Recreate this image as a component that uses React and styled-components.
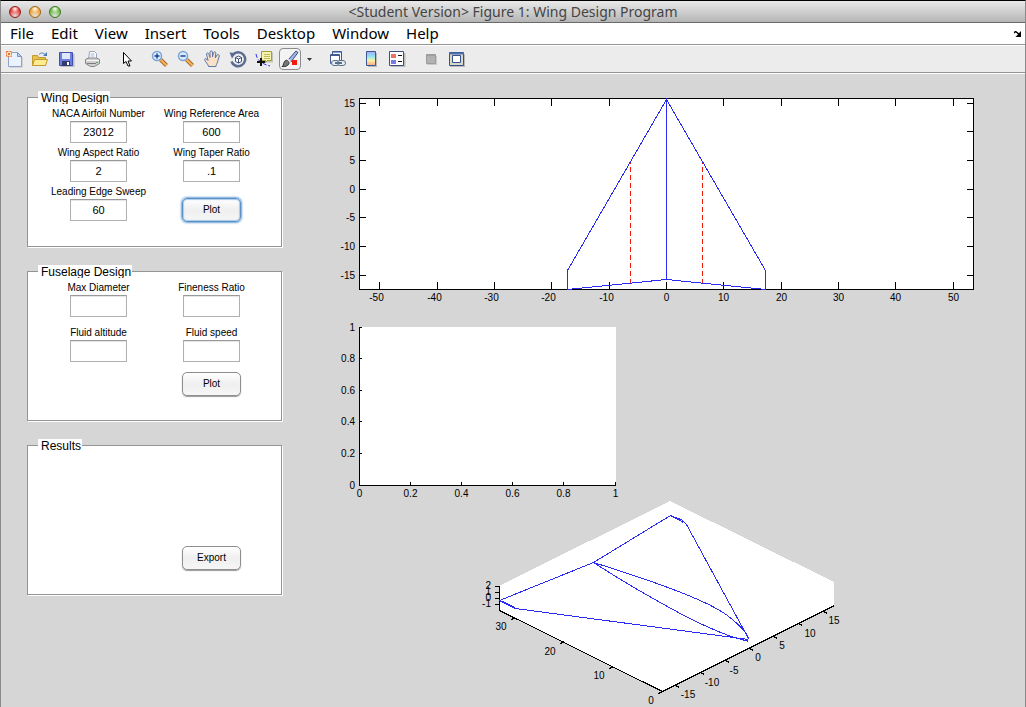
import { Fragment } from 'react';
import styled, { createGlobalStyle, css } from 'styled-components';

const GlobalStyle = createGlobalStyle`
  * {
    box-sizing: border-box;
  }

  body {
    margin: 0;
    background: #d6d6d6;
    color: #000;
    font-family: "Liberation Sans", Helvetica, Arial, sans-serif;
  }

  button {
    font: inherit;
    color: inherit;
  }
`;

const menus = ['File', 'Edit', 'View', 'Insert', 'Tools', 'Desktop', 'Window', 'Help'];

const wingFields = [
  { id: 'airfoil', label: 'NACA Airfoil Number', value: '23012' },
  { id: 'refArea', label: 'Wing Reference Area', value: '600' },
  { id: 'aspectRatio', label: 'Wing Aspect Ratio', value: '2' },
  { id: 'taperRatio', label: 'Wing Taper Ratio', value: '.1' },
  { id: 'sweep', label: 'Leading Edge Sweep', value: '60' },
];

const fuselageFields = [
  { id: 'maxDiameter', label: 'Max Diameter', value: '' },
  { id: 'fineness', label: 'Fineness Ratio', value: '' },
  { id: 'altitude', label: 'Fluid altitude', value: '' },
  { id: 'speed', label: 'Fluid speed', value: '' },
];

const icons = {
  newFile: (
    <>
      <path d="M5 3.5h8.5l4 4v10H5z" fill="#9aa0ac" opacity=".6" />
      <path d="M3.5 2.5h9l4 4v10h-13z" fill="#eaf2fd" stroke="#8fa2cc" />
      <path d="M12.5 2.5v4h4z" fill="#b9cdf0" stroke="#7d93c4" />
      <path d="M1.5 1.5h5v5h-5z" fill="#ffe3b5" stroke="#e8703a" strokeDasharray="2 1" />
      <path d="M3 3h2v2H3z" fill="#e8703a" />
    </>
  ),
  open: (
    <>
      <path d="M1.5 15.5v-10h5l1 2h7v8z" fill="#e9c04e" stroke="#c39a2c" />
      <path d="M1.5 15.5l2-6h13l-2 6z" fill="#fdeb8f" stroke="#c39a2c" />
      <path d="M8 4.5c2-2 4-2 6 0" fill="none" stroke="#4b78b8" />
      <path d="M16 2v4h-4z" fill="#4b78b8" />
    </>
  ),
  save: (
    <>
      <path d="M3.5 4h14v13h-14z" fill="#8d8d99" opacity=".5" />
      <path d="M2.5 2.5h13v13h-13z" fill="#6f7fe0" stroke="#4250ac" />
      <path d="M5 3h8v6H5z" fill="#dfe9fb" />
      <path d="M5 11h8v5H5z" fill="#333a6c" />
      <path d="M10 12h2v3h-2z" fill="#fff" />
    </>
  ),
  print: (
    <>
      <path d="M5.5 9.5l1-8h5l2 2v6" fill="#fff" stroke="#9aa6bc" />
      <path d="M7.5 4h4M7.5 6h4" stroke="#9fb4dc" />
      <path d="M2.5 9.5l3-1.500h8l3 1.500v4l-5 3h-4l-5-3z" fill="#cfcfcf" stroke="#858585" />
      <path d="M3 10.500h13" stroke="#f5f5f5" />
      <path d="M4 13.500h9" stroke="#7c7c7c" />
      <path d="M13 12h2v1h-2z" fill="#5bb554" />
    </>
  ),
  pointer: <path d="M6.5 2.5v11l2.5-2 2 4.500h2l-2-5h3.500z" fill="#fff" stroke="#000" />,
  zoomIn: (
    <>
      <path d="M9.5 9.5l6 6" stroke="#a86d2c" strokeWidth="4" />
      <path d="M9.5 9.5l6 6" stroke="#f6b45e" strokeWidth="2" />
      <circle cx="6" cy="6" r="4.5" fill="#d5eefb" stroke="#7fa1d6" strokeWidth="1.5" />
      <path d="M3.5 6h5M6 3.5v5" stroke="#1f3f94" strokeWidth="1.5" />
    </>
  ),
  zoomOut: (
    <>
      <path d="M9.5 9.5l6 6" stroke="#a86d2c" strokeWidth="4" />
      <path d="M9.5 9.5l6 6" stroke="#f6b45e" strokeWidth="2" />
      <circle cx="6" cy="6" r="4.5" fill="#d5eefb" stroke="#7fa1d6" strokeWidth="1.5" />
      <path d="M3.5 6h5" stroke="#1f3f94" strokeWidth="1.5" />
    </>
  ),
  pan: (
    <path
      d="M5.500 16.500c0-2-3.500-5-4-7 .5-1.500 2-1 3.500 1L3.500 4c.5-1.500 2-1.500 2.500.5l1 3V2c.5-1.500 2-1.500 2.500 0v5l1-4.500c.8-1.300 2.300-.8 2.300.5L12.300 8l1.700-3c1-1 2.500-.3 2.300 1l-1.800 6c-.5 2-1.500 2.500-1.500 4.500z"
      fill="#fbe0c8"
      stroke="#5d78ad"
    />
  ),
  rotate: (
    <>
      <path d="M4 4.500a7 7 0 1 1-1.500 7" fill="none" stroke="#5b6d92" strokeWidth="2.500" />
      <path d="M0.500 2.500l6.500.5-4 5.500z" fill="#5b6d92" />
      <path d="M6.500 7.500l3-1.500 3 1.500v4l-3 1.500-3-1.500zM6.500 7.500l3 1.500 3-1.500M9.500 9v4" fill="#fff" stroke="#41527a" />
    </>
  ),
  dataCursor: (
    <>
      <path d="M8 2.500h10v10H8z" fill="#9c9c8a" opacity=".5" />
      <path d="M6.500 1.500h10v9h-4l-2 2v-2h-4z" fill="#f4f2ae" stroke="#a39c3c" />
      <path d="M9 4.500h6M9 6.500h6M9 8.500h6" stroke="#c2bb62" />
      <path d="M1 4c1 5 3 9 14 12" fill="none" stroke="#2a2ae8" strokeDasharray="4 2" />
      <path d="M2 12h8M6 8v8" stroke="#111" strokeWidth="2" />
    </>
  ),
  brush: (
    <>
      <path d="M7 10l8-9 2 1.500L10 12z" fill="#9db8e6" stroke="#3c4f7c" />
      <path d="M1 16.500c2-1 1-4 3.500-6 2-1 4 1 3.500 3-1 2.500-4 3.500-7 3z" fill="#777" stroke="#333" />
      <path d="M6.500 9l3 3" stroke="#eee" strokeWidth="1.500" />
      <path d="M11 10h5v5h-5z" fill="#f51b0b" />
    </>
  ),
  link: (
    <>
      <path d="M4.500 1.500h9v9h-9z" fill="#f2f7ff" stroke="#42598f" />
      <path d="M5 2.500h8" stroke="#7f9bd0" />
      <path d="M2.500 4.500h9v9h-9z" fill="#fff" stroke="#42598f" />
      <path d="M3 5.500h8" stroke="#42598f" />
      <rect x="3.500" y="10.500" width="8" height="5" rx="2.500" fill="#e6edf4" stroke="#5a7088" />
      <rect x="9.500" y="10.500" width="8" height="5" rx="2.500" fill="#e6edf4" stroke="#5a7088" />
      <path d="M7 13h7" stroke="#5a7088" strokeWidth="2" />
    </>
  ),
  colorbar: (
    <>
      <defs>
        <linearGradient id="barFill" x1="0" y1="0" x2="0" y2="1">
          <stop offset="0" stopColor="#a9a7f3" />
          <stop offset=".35" stopColor="#8fe4f5" />
          <stop offset=".65" stopColor="#f9f4a0" />
          <stop offset="1" stopColor="#f9a290" />
        </linearGradient>
      </defs>
      <path d="M6 3h9v14H6z" fill="#999" opacity=".6" />
      <path d="M4.500 1.500h9v14h-9z" fill="url(#barFill)" stroke="#3d5790" />
    </>
  ),
  legend: (
    <>
      <path d="M3 3h14.500v14H3z" fill="#999" opacity=".6" />
      <path d="M1.500 1.500h14v14h-14z" fill="#fff" stroke="#3d4f80" />
      <path d="M3 4h5v4H3z" fill="#ee7168" />
      <path d="M3 10h5v4H3z" fill="#7b79e8" />
      <path d="M10 5.500h4M10 11.500h4" stroke="#111" />
    </>
  ),
  hideTools: (
    <>
      <path d="M5 6h10v9H5z" fill="#c9c9c9" />
      <path d="M4.500 4.500h9v9h-9z" fill="#b2b2b2" stroke="#9c9c9c" />
      <path d="M5 5.500h8" stroke="#a0a0a0" />
    </>
  ),
  showTools: (
    <>
      <path d="M2 4h15v13H2z" fill="#999" opacity=".6" />
      <path d="M1.500 2.500h14v13h-14z" fill="#d9d8c6" stroke="#34508f" />
      <path d="M1 3.500h15" stroke="#4f6eae" strokeWidth="2" />
      <path d="M4.500 5.500h8v7h-8z" fill="#fff" stroke="#34508f" />
    </>
  ),
};

const toolGroups = [
  ['newFile', 'open', 'save', 'print'],
  ['pointer'],
  ['zoomIn', 'zoomOut', 'pan', 'rotate', 'dataCursor', 'brush'],
  ['link'],
  ['colorbar', 'legend'],
  ['hideTools', 'showTools'],
];

function ToolBar() {
  return (
    <ToolBarStyle>
      {toolGroups.map((group) => (
        <ToolGroup key={group[0]}>
          {group.map((name) => (
            <Fragment key={name}>
              <ToolButton type="button" aria-label={name}>
                <ToolFace $pressed={name === 'brush'}>
                  <svg width="18" height="18" fill="none">
                    {icons[name]}
                  </svg>
                </ToolFace>
              </ToolButton>
              {name === 'brush' && (
                <CaretButton type="button" aria-label="brush colour">
                  <svg width="5" height="3">
                    <path d="M0 0h5L2.500 3z" fill="#333" />
                  </svg>
                </CaretButton>
              )}
            </Fragment>
          ))}
        </ToolGroup>
      ))}
    </ToolBarStyle>
  );
}

function Panel({ title, fields = [], rowGap, action, focused }) {
  return (
    <PanelStyle>
      <PanelTitle>{title}</PanelTitle>
      <PanelGrid $rowGap={rowGap}>
        {fields.map(({ id, label, value }) => (
          <Field key={id}>
            <label htmlFor={id}>{label}</label>
            <input id={id} type="text" defaultValue={value} />
          </Field>
        ))}
        <PushButton type="button" $focused={focused}>
          {action}
        </PushButton>
      </PanelGrid>
    </PanelStyle>
  );
}

function PlanformPlot() {
  const toX = (v) => Math.round(666 + v * 5.735) + 0.5;
  const toY = (v) => Math.round(188.7 - v * 5.735) + 0.5;

  return (
    <WidePlot viewBox="335 90 650 215">
      <rect x="359.500" y="98.500" width="614" height="191" fill="#fff" stroke="#000" />
      {[-50, -40, -30, -20, -10, 0, 10, 20, 30, 40, 50].map((v) => (
        <Fragment key={v}>
          <path d={`M${toX(v)} 98v8M${toX(v)} 290v-8`} stroke="#000" />
          <text x={toX(v) - (v < 0 ? 3 : 0)} y="301" textAnchor="middle">
            {v}
          </text>
        </Fragment>
      ))}
      {[15, 10, 5, 0, -5, -10, -15].map((v) => (
        <Fragment key={v}>
          <path d={`M359 ${toY(v)}h7M974 ${toY(v)}h-7`} stroke="#000" />
          <text x="355" y={toY(v) + 3.5} textAnchor="end">
            {v}
          </text>
        </Fragment>
      ))}
      <path d="M630.500 284V162M702.500 284V162" stroke="#f51b0b" strokeDasharray="5 3" />
      <path
        d="M666.500 99.500L567.500 270.500V289.500L666.500 279.500L765.500 289.500V270.500L666.500 99.500V279.500"
        fill="none"
        stroke="#2a2af5"
      />
    </WidePlot>
  );
}

function EmptyPlot() {
  const ticks = [0, 0.2, 0.4, 0.6, 0.8, 1];
  const toX = (v) => Math.floor(359 + v * 256) + 0.5;
  const toY = (v) => Math.floor(485 - v * 158) + 0.5;

  return (
    <SmallPlot viewBox="335 318 300 182">
      <path d="M359 327h257v159H359z" fill="#fff" />
      <path d="M359.500 327v158.500H616" fill="none" stroke="#000" />
      {ticks.map((v) => (
        <Fragment key={v}>
          <path d={`M${toX(v)} 486v-4M359 ${toY(v)}h3`} stroke="#000" />
          <text x={toX(v)} y="497" textAnchor="middle">
            {v}
          </text>
          <text x="355" y={toY(v) + 3.5} textAnchor="end">
            {v}
          </text>
        </Fragment>
      ))}
    </SmallPlot>
  );
}

const isoLabels = [
  ['30', 501, 630],
  ['20', 550, 655],
  ['10', 599, 679],
  ['0', 651, 704],
  ['-15', 688, 698],
  ['-10', 712, 686],
  ['-5', 734, 674],
  ['0', 758, 661],
  ['5', 782, 649],
  ['10', 810, 637],
  ['15', 834, 624],
];

const isoHeights = [
  ['2', 589],
  ['1', 595],
  ['0', 601],
  ['-1', 607],
];

function IsoPlot() {
  return (
    <OffsetPlot viewBox="470 500 380 207">
      <path d="M499 586L670 501L834 582V605L662 691L499 610z" fill="#fff" />
      <path d="M499.500 586V610.500L662.500 691.500L834.500 605.500" fill="none" stroke="#000" />
      <path
        d="M499 586.500h-4M499 592.500h-4M499 598.500h-4M499 604.500h-4M515.500 617.500l-4 2M564.500 641.500l-4 2M613.500 666.500l-4 2M662.500 691.500l-4 2"
        stroke="#000"
      />
      <path
        d="M675.500 685.500l4 2M700.500 672.500l4 2M725.500 660.500l4 2M749.500 648.500l4 2M773.500 636.500l4 2M798.500 623.500l4 2M823.500 611.500l4 2"
        stroke="#000"
      />
      {isoHeights.map(([text, y]) => (
        <text key={text} x="491" y={y} textAnchor="end">
          {text}
        </text>
      ))}
      {isoLabels.map(([text, x, y]) => (
        <text key={`${x}-${y}`} x={x} y={y} textAnchor="middle">
          {text}
        </text>
      ))}
      <g fill="none" stroke="#2a2af5">
        <path d="M499.500 600.500L593.500 562.500L670.500 515.500L682 520L686.500 524.500L748.500 638.500" />
        <path d="M670.500 515.500L683.500 522.500M499.500 600.500L515.500 608.500L748.500 639.500M502.500 601.500L514.500 607.500" />
        <path d="M593.500 562.500C640 577 674 589 699 600Q722 610 733 620Q745 630 748.500 638L747 641.500" />
        <path d="M593.500 562.500Q636 590 683 615Q726 637 748 641" />
      </g>
    </OffsetPlot>
  );
}

function App() {
  return (
    <>
      <GlobalStyle />
      <Window>
        <TitleBar>
          <Lights>
            <Light type="button" $edge="#8f1f1c" $color="#e8443f" aria-label="Close" />
            <Light type="button" $edge="#9a6217" $color="#f3a83b" aria-label="Minimize" />
            <Light type="button" $edge="#3d7524" $color="#72bf4c" aria-label="Zoom" />
          </Lights>
          <Title>&lt;Student Version&gt; Figure 1: Wing Design Program</Title>
        </TitleBar>
        <MenuBar>
          {menus.map((menu) => (
            <MenuItem key={menu} type="button">
              {menu}
            </MenuItem>
          ))}
          <DockButton type="button" aria-label="Dock figure">
            <svg width="8" height="6" fill="none">
              <path d="M0 2l1.500-1.500 4 3" stroke="#000" strokeWidth="1.500" />
              <path d="M7 0v6H1.500z" fill="#000" />
            </svg>
          </DockButton>
        </MenuBar>
        <ToolBar />
        <Canvas>
          <Panels>
            <Panel title="Wing Design" fields={wingFields} rowGap={3} action="Plot" focused />
            <Panel title="Fuselage Design" fields={fuselageFields} rowGap={9} action="Plot" />
            <Panel title="Results" rowGap={9} action="Export" />
          </Panels>
          <Plots>
            <PlanformPlot />
            <EmptyPlot />
            <IsoPlot />
          </Plots>
        </Canvas>
      </Window>
    </>
  );
}

export default App;

const Window = styled.div`
  display: flex;
  flex-direction: column;
  min-height: 100vh;
  border: 1px solid #8a8a8a;
  border-width: 1px 1px 0;
  border-top-color: #000;
`;

const TitleBar = styled.header`
  display: grid;
  grid-template-columns: 60px 1fr 60px;
  align-items: center;
  height: 22px;
  padding: 0 8px;
  border-bottom: 1px solid #6a6a6a;
  background: linear-gradient(#e9e9e9, #b5b5b5);
`;

const Lights = styled.div`
  display: flex;
  gap: 8px;
`;

const Light = styled.button`
  width: 12px;
  height: 12px;
  padding: 0;
  border: 1px solid ${({ $edge }) => $edge};
  border-radius: 50%;
  background: radial-gradient(circle at 50% 20%, #fff 0, transparent 40%),
    radial-gradient(circle at 50% 90%, #fff8 0, ${({ $color }) => $color} 60%);
`;

const Title = styled.h1`
  margin: 0;
  color: #444;
  font: 14px/20px "Noto Sans", "Open Sans", sans-serif;
  text-align: center;
`;

const MenuBar = styled.nav`
  display: flex;
  align-items: flex-start;
  height: 22px;
  padding-left: 1px;
  border-bottom: 1px solid #949494;
  background: #fff;
  font: 15px/20px "Noto Sans", "Open Sans", sans-serif;
`;

const MenuItem = styled.button`
  padding: 0 8px;
  border: 0;
  background: none;

  & + & {
    margin-left: 1px;
  }
`;

const DockButton = styled.button`
  display: flex;
  align-self: center;
  margin-left: auto;
  padding: 4px 3px;
  border: 0;
  background: none;
`;

const ToolBarStyle = styled.div`
  display: flex;
  gap: 8px;
  height: 28px;
  border-top: 1px solid #fff;
  border-bottom: 1px solid #949494;
  background: #ececec;
`;

const ToolGroup = styled.div`
  display: flex;
  align-items: center;
`;

const ToolButton = styled.button`
  display: flex;
  align-items: center;
  justify-content: center;
  width: 26px;
  height: 26px;
  padding: 0;
  border: 0;
  background: none;
`;

const ToolFace = styled.span`
  display: flex;
  align-items: center;
  justify-content: center;
  width: 22px;
  height: 22px;

  ${({ $pressed }) =>
    $pressed &&
    css`
      border: 1px solid #8c8c8c;
      border-radius: 4px;
      background: #f3f3f3;
    `}
`;

const CaretButton = styled.button`
  display: flex;
  align-items: center;
  justify-content: center;
  width: 13px;
  height: 26px;
  padding: 0;
  border: 0;
  background: none;
`;

const Canvas = styled.main`
  display: flex;
  flex: 1;
  gap: 52px;
  padding: 16px 40px 0 26px;
  border-top: 1px solid #fff;
  background: #d6d6d6;
`;

const Panels = styled.div`
  display: flex;
  flex: none;
  flex-direction: column;
  gap: 18px;
  width: 256px;
  padding-top: 1px;
`;

const PanelStyle = styled.fieldset`
  margin: 0 1px 0 0;
  padding: 0;
  border: 1px solid #949494;
  background: #fff;
  box-shadow: 1px 1px 0 #fff;
`;

const PanelTitle = styled.legend`
  height: 13px;
  margin-left: 10px;
  padding: 0 1px 0 3px;
  overflow: hidden;
  background: #fff;
  font-size: 12px;
  line-height: 15px;
`;

const PanelGrid = styled.div`
  display: grid;
  grid-template-columns: 1fr 1fr;
  grid-template-rows: auto auto 1fr;
  row-gap: ${({ $rowGap }) => $rowGap}px;
  min-height: 142px;
  padding: 3px 13px 24px 14px;
`;

const Field = styled.div`
  display: flex;
  flex-direction: column;
  align-items: center;
  gap: 1px;

  label {
    font-size: 10px;
    line-height: 13px;
    white-space: nowrap;
  }

  input {
    width: 57px;
    height: 22px;
    padding: 0;
    border: 1px solid #b0b0b0;
    border-top-color: #999;
    border-radius: 0;
    background: #fff;
    box-shadow: inset 0 1px 1px #e4e4e4;
    font: 11px "Liberation Sans", Helvetica, Arial, sans-serif;
    text-align: center;
  }
`;

const PushButton = styled.button`
  grid-column: 2;
  grid-row: 3;
  align-self: end;
  justify-self: center;
  width: 59px;
  height: 24px;
  padding: 0 0 2px;
  border: 1px solid #8e8e8e;
  border-radius: 5px;
  background: linear-gradient(#fff, #efefef 50%, #f6f6f6);
  box-shadow: 0 1px 1px #9a9a9a;
  font-size: 10px;

  ${({ $focused }) =>
    $focused &&
    css`
      border-color: #5c8fc6;
      box-shadow: 0 0 2px 1px #6fa5da, inset 0 0 1px 1px #a9cbea;
    `}
`;

const Plots = styled.div`
  display: flex;
  flex: 1;
  flex-direction: column;
  min-width: 0;
`;

const WidePlot = styled.svg`
  width: 100%;
  shape-rendering: crispEdges;
  font-size: 10px;
`;

const SmallPlot = styled(WidePlot)`
  max-width: 300px;
  margin-top: 13px;
`;

const OffsetPlot = styled(WidePlot)`
  max-width: 380px;
  margin-left: 135px;
`;
